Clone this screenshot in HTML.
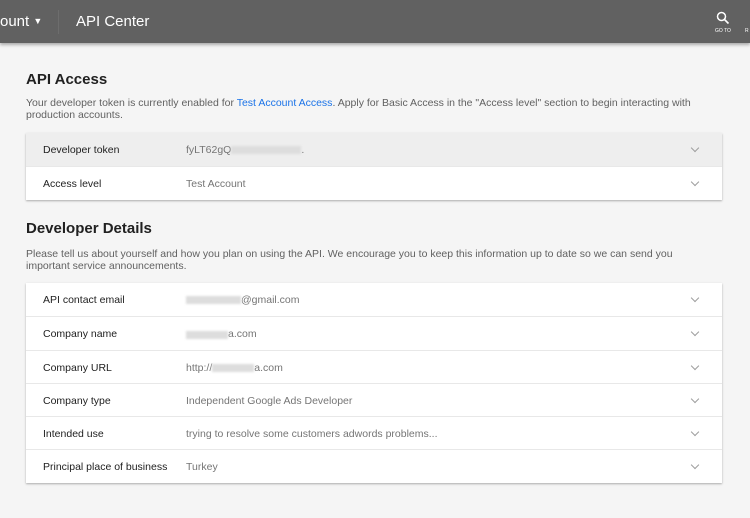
<!DOCTYPE html>
<html><head><style>
body{margin:0;width:750px;height:518px;background:#f5f5f5;font-family:"Liberation Sans",Arial,sans-serif;overflow:hidden;position:relative}
.hdr{position:absolute;left:0;top:0;width:750px;height:43px;background:#616161;box-shadow:0 2px 3px rgba(0,0,0,.3);color:#fff}
.hdr .a{position:absolute;left:0;top:13px;font-size:15px}
.hdr .sep{position:absolute;left:58px;top:10px;width:1px;height:24px;background:#6d6d6d}
.hdr .b{position:absolute;left:76px;top:13px;font-size:15px}
.h2{position:absolute;left:26px;font-size:15px;font-weight:bold;color:#212121}
.p{position:absolute;left:26px;width:690px;font-size:10.5px;line-height:12px;color:#616161}
.card{position:absolute;left:26px;width:696px;background:#fff;box-shadow:0 1px 2px rgba(0,0,0,.3)}
.row{position:relative;height:32.3px;border-top:1px solid #e8e8e8;font-size:10.5px}
.row:first-child{border-top:none;height:33.3px}
.row .l{position:absolute;left:17px;top:11px;color:#212121}
.row .v{position:absolute;left:160px;top:11px;color:#757575}
.row .c{position:absolute;left:666px;top:12px;width:5px;height:5px;border-right:1.3px solid #9e9e9e;border-bottom:1.3px solid #9e9e9e;transform:rotate(45deg)}
.blur{display:inline-block;background:#ddd;height:8px;vertical-align:middle;filter:blur(1px)}
</style></head><body>
<div class="hdr"><div class="a">ount <span style="font-size:9px;vertical-align:2px">&#9660;</span></div><div class="sep"></div><div class="b">API Center</div>
<svg style="position:absolute;left:716px;top:11px" width="14" height="14" viewBox="0 0 14 14"><circle cx="5.5" cy="5.5" r="4" fill="none" stroke="#fff" stroke-width="1.5"/><path d="M8.5 8.5L12.5 12.5" stroke="#fff" stroke-width="1.6"/></svg>
<div style="position:absolute;left:715px;top:28px;font-size:5px">GO TO</div><div style="position:absolute;left:745px;top:28px;font-size:5px">R</div></div>
<div class="h2" style="top:71px">API Access</div>
<div class="p" style="top:97px">Your developer token is currently enabled for <span style="color:#1a73e8">Test Account Access</span>. Apply for Basic Access in the "Access level" section to begin interacting with production accounts.</div>
<div class="card" style="top:133px">
<div class="row" style="background:#eee"><span class="l">Developer token</span><span class="v">fyLT62gQ<span class="blur" style="width:70px"></span>.</span><span class="c"></span></div>
<div class="row"><span class="l">Access level</span><span class="v">Test Account</span><span class="c"></span></div>
</div>
<div class="h2" style="top:220px">Developer Details</div>
<div class="p" style="top:248px">Please tell us about yourself and how you plan on using the API. We encourage you to keep this information up to date so we can send you important service announcements.</div>
<div class="card" style="top:283px">
<div class="row"><span class="l">API contact email</span><span class="v"><span class="blur" style="width:55px"></span>@gmail.com</span><span class="c"></span></div>
<div class="row"><span class="l">Company name</span><span class="v"><span class="blur" style="width:42px"></span>a.com</span><span class="c"></span></div>
<div class="row"><span class="l">Company URL</span><span class="v">http://<span class="blur" style="width:42px"></span>a.com</span><span class="c"></span></div>
<div class="row"><span class="l">Company type</span><span class="v">Independent Google Ads Developer</span><span class="c"></span></div>
<div class="row"><span class="l">Intended use</span><span class="v">trying to resolve some customers adwords problems...</span><span class="c"></span></div>
<div class="row"><span class="l">Principal place of business</span><span class="v">Turkey</span><span class="c"></span></div>
</div>
</body></html>
